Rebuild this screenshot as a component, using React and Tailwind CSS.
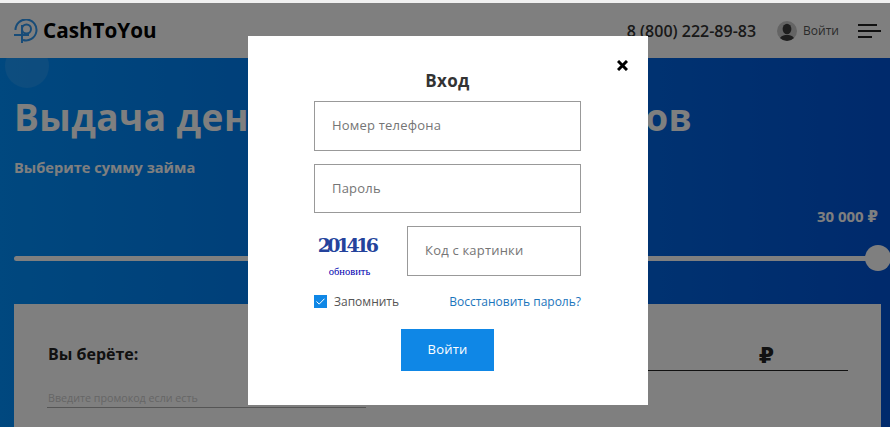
const font = { fontFamily: '"Open Sans", "DejaVu Sans", sans-serif' };

const Logo = () => (
  <svg width="24" height="24" viewBox="0 0 24 24" fill="none" stroke="#3098f0" strokeWidth="2">
    <path d="M1.5 11A10.5 10.5 0 1 1 9 21" />
    <circle cx="12.5" cy="10" r="4.5" />
    <path d="M8 6v18" />
    <path d="M0 16h15" />
  </svg>
);

const Avatar = () => (
  <svg width="20" height="20" viewBox="0 0 20 20" className="rounded-full">
    <rect width="20" height="20" fill="#c9c9c9" />
    <ellipse cx="10" cy="8" rx="4.4" ry="5.2" fill="#3d3d3d" />
    <path d="M2.5 20c0-4.6 3.4-6 7.5-6s7.5 1.4 7.5 6z" fill="#3d3d3d" />
  </svg>
);

const Input = ({ placeholder, className }) => (
  <div className={`border border-[#999] h-[49.5px] flex items-center px-[17px] text-[13px] tracking-[0.2px] text-[#757575] ${className}`}>
    {placeholder}
  </div>
);

const LoginModal = () => (
  <div className="absolute inset-x-0 top-[3px] bottom-0 bg-black/50">
    <div className="absolute left-[248px] top-[33px] w-[400px] h-[369px] bg-white pl-[66px] pr-[67px] pt-[34px]">
      <svg className="absolute right-[20px] top-[24px]" width="11" height="11" viewBox="0 0 11 11" stroke="#000" strokeWidth="3">
        <path d="M1 1l9 9M10 1l-9 9" />
      </svg>
      <h2 className="text-center text-[17px] leading-[22px] font-bold text-[#333] tracking-[0.3px] mb-[9px]">Вход</h2>
      <Input placeholder="Номер телефона" />
      <Input placeholder="Пароль" className="mt-[13px]" />
      <div className="flex mt-[13px] h-[49.5px]">
        <div className="w-[93px] flex flex-col items-center pr-[22px] pt-[6px]">
          <span className="text-[19px] leading-[26px] font-bold tracking-[-3.6px] text-[#24439c] pr-[6px]" style={{ fontFamily: '"DejaVu Serif", serif' }}>201416</span>
          <span className="text-[10.5px] leading-[12px] mt-[8px] text-[#0000b0]" style={{ fontFamily: '"Liberation Serif", serif' }}>обновить</span>
        </div>
        <Input placeholder="Код с картинки" className="flex-1" />
      </div>
      <div className="flex items-center justify-between mt-[18px] text-[12px] leading-[16px]">
        <div className="flex items-center gap-[7px] text-[#555]">
          <span className="w-[13px] h-[13px] bg-[#0f87e6] flex items-center justify-center">
            <svg width="9" height="7" viewBox="0 0 9 7" fill="none" stroke="#fff" strokeWidth="1">
              <path d="M0.5 3.5l2.7 2.6L8.5 0.7" />
            </svg>
          </span>
          Запомнить
        </div>
        <span className="text-[#1b75bc]">Восстановить пароль?</span>
      </div>
      <div className="flex justify-center mt-[19px]">
        <button className="w-[93px] h-[42px] bg-[#0f87e6] text-white text-[13px] tracking-[0.2px]">Войти</button>
      </div>
    </div>
  </div>
);

export default function App() {
  return (
    <div className="relative w-[890px] h-[427px] overflow-hidden bg-white" style={font}>
      <div className="h-[3px] bg-[#f0f0f0]" />
      <header className="h-[55px] bg-white flex items-center pl-[14px] pr-[8px]">
        <Logo />
        <span className="ml-[5px] text-[20.7px] font-bold text-black">CashToYou</span>
        <span className="ml-auto mr-[1px] text-[16px] font-semibold text-[#333]">8 (800) 222-89-83</span>
        <span className="ml-[20px]"><Avatar /></span>
        <span className="ml-[6px] text-[12px] text-[#555]">Войти</span>
        <span className="ml-[19px] flex flex-col gap-[4px] w-[24px]">
          <i className="block h-[2px] w-[19px] bg-[#222]" />
          <i className="block h-[2px] w-[23px] bg-[#222]" />
          <i className="block h-[2px] w-[14px] bg-[#222]" />
        </span>
      </header>
      <main className="relative h-[369px] bg-gradient-to-r from-[#0090fe] to-[#0054d8] px-[14px] pt-[34px]">
        <span className="absolute left-[5px] top-[-14px] w-[44px] h-[44px] rounded-full bg-white/10" />
        <h1 className="text-[37px] leading-[50px] font-bold tracking-[0.45px] text-white whitespace-nowrap">Выдача денег онлайн без отказов</h1>
        <p className="mt-[15px] text-[14.6px] leading-[20px] font-bold text-white">Выберите сумму займа</p>
        <div className="-mr-[2px] text-right text-[15px] leading-[20px] font-bold text-white mt-[29px]">30 000 ₽</div>
        <div className="relative mt-[30px] h-[5px] bg-white rounded-full w-[864px]">
          <span className="absolute right-[-13px] top-[-11px] w-[26px] h-[26px] rounded-full bg-white" />
        </div>
        <section className="mt-[43px] w-[867px] h-[130px] bg-white grid grid-cols-2 pl-[33px] pr-[33px] pt-[35px]">
          <div>
            <div className="ml-px text-[16px] leading-[30px] font-bold text-[#222]">Вы берёте:</div>
            <div className="mt-[20px] w-[319px] pl-px border-b border-[#aaa] text-[10.7px] leading-[18px] text-[#ccc]">Введите промокод если есть</div>
          </div>
          <div className="h-[32px] border-b border-[#222] text-right pr-[74px] text-[22px] leading-[30px] font-bold text-[#222]">₽</div>
        </section>
      </main>
      <LoginModal />
    </div>
  );
}
